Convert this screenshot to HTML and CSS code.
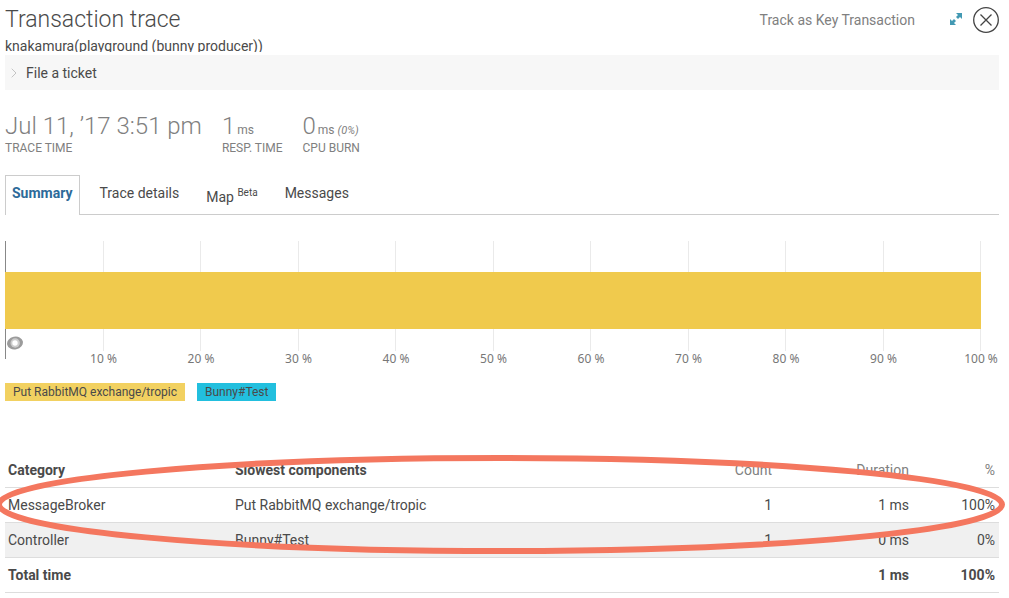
FILE: index.html
```html
<!DOCTYPE html>
<html lang="en">
<head>
<meta charset="utf-8">
<title>Transaction trace</title>
<link rel="stylesheet" href="styles.css">
</head>
<body>
<header class="header">
  <div class="heading">
    <h1 class="title">Transaction trace</h1>
    <p class="subtitle">knakamura(playground (bunny producer))</p>
  </div>
  <div class="actions">
    <a class="track" href="#">Track as Key Transaction</a>
    <button class="icon-button expand" type="button" aria-label="Expand">
      <svg width="12" height="12" viewBox="0 0 12 12" fill="#4299b3"><path d="M6 0h6v6l-2-2-2 2-2-2 2-2zM0 6l2 2 2-2 2 2-2 2 2 2H0z"/></svg>
    </button>
    <button class="icon-button" type="button" aria-label="Close">
      <svg width="26" height="26" viewBox="0 0 26 26" fill="none" stroke="#444"><circle cx="13" cy="13" r="12.3" stroke-width="1.3"/><path d="M7.5 7.5l11 11M18.5 7.5l-11 11" stroke-width="1.3"/></svg>
    </button>
  </div>
</header>
<button class="ticket" type="button">
  <svg width="6" height="10" viewBox="0 0 6 10" fill="none" stroke="#c4c4c4"><path d="M.7.7L5 5 .7 9.3"/></svg>
  File a ticket
</button>
<dl class="stats">
  <div class="stat"><dt class="stat-label">TRACE TIME</dt><dd class="stat-value">Jul 11, ’17 3:51 pm</dd></div>
  <div class="stat"><dt class="stat-label">RESP. TIME</dt><dd class="stat-value">1<span class="unit">ms</span></dd></div>
  <div class="stat"><dt class="stat-label">CPU BURN</dt><dd class="stat-value">0<span class="unit">ms <i class="share">(0%)</i></span></dd></div>
</dl>
<nav class="tabs">
  <a class="tab tab-active" href="#">Summary</a>
  <a class="tab" href="#">Trace details</a>
  <a class="tab tab-beta" href="#">Map <sup class="beta">Beta</sup></a>
  <a class="tab" href="#">Messages</a>
</nav>
<section class="chart" aria-label="Time by component">
  <div class="bar"></div>
  <div class="scale">
    <div class="tick"><span class="tick-label">10 %</span></div>
    <div class="tick"><span class="tick-label">20 %</span></div>
    <div class="tick"><span class="tick-label">30 %</span></div>
    <div class="tick"><span class="tick-label">40 %</span></div>
    <div class="tick"><span class="tick-label">50 %</span></div>
    <div class="tick"><span class="tick-label">60 %</span></div>
    <div class="tick"><span class="tick-label">70 %</span></div>
    <div class="tick"><span class="tick-label">80 %</span></div>
    <div class="tick"><span class="tick-label">90 %</span></div>
    <div class="tick"><span class="tick-label">100 %</span></div>
  </div>
  <svg class="marker" width="16" height="14" viewBox="0 0 16 14"><ellipse cx="8" cy="7" rx="8" ry="6.3" fill="#9b9b9b" transform="rotate(-12 8 7)"/><circle cx="8.2" cy="7" r="4.7" fill="#ccc"/><circle cx="8" cy="7" r="2.7" fill="#fff"/></svg>
</section>
<div class="legend">
  <span class="key key-put">Put RabbitMQ exchange/tropic</span>
  <span class="key key-bunny">Bunny#Test</span>
</div>
<div class="breakdown">
  <table class="table">
    <colgroup><col class="col-category"><col class="col-component"><col class="col-count"><col class="col-duration"><col class="col-percent"></colgroup>
    <thead>
      <tr><th>Category</th><th>Slowest components</th><th class="num">Count</th><th class="num">Duration</th><th class="num">%</th></tr>
    </thead>
    <tbody>
      <tr><td>MessageBroker</td><td>Put RabbitMQ exchange/tropic</td><td class="num">1</td><td class="num">1 ms</td><td class="num">100%</td></tr>
      <tr class="striped"><td>Controller</td><td>Bunny#Test</td><td class="num">1</td><td class="num">0 ms</td><td class="num">0%</td></tr>
    </tbody>
    <tfoot>
      <tr><td>Total time</td><td></td><td></td><td class="num">1 ms</td><td class="num">100%</td></tr>
    </tfoot>
  </table>
  <svg class="highlight" viewBox="0 0 1000 100" preserveAspectRatio="none" fill="none"><ellipse cx="500" cy="50" rx="500" ry="50" stroke="#f4775f" stroke-width="6" vector-effect="non-scaling-stroke"/></svg>
</div>
</body>
</html>
```
FILE: styles.css
```css
* { box-sizing: border-box; }
body {
  margin: 0;
  padding: 7px 10px 0 5px;
  background: #fff;
  color: #4a4a4a;
  font: 14px/18px Roboto, "Liberation Sans", sans-serif;
  overflow-x: hidden;
}
h1, p, dl, dd { margin: 0; }
a { color: inherit; text-decoration: none; }
button { border: 0; margin: 0; padding: 0; background: none; color: inherit; font: inherit; }
svg { display: block; }

.header { display: flex; justify-content: space-between; align-items: flex-start; height: 48px; }
.heading { height: 45px; overflow: hidden; }
.title { font-size: 23px; line-height: 26px; font-weight: 300; }
.subtitle { margin-top: 4px; }
.actions { display: flex; align-items: center; }
.track { color: #808080; }
.expand { margin: 0 11px 3px 35px; }

.ticket {
  display: flex;
  align-items: center;
  gap: 9px;
  width: 100%;
  height: 35px;
  padding: 0 6px;
  background: #f7f7f7;
}

.stats { display: flex; gap: 20px; margin-top: 21px; color: #808080; }
.stat { display: flex; flex-direction: column-reverse; }
.stat-value { font-size: 24px; line-height: 30px; font-weight: 300; white-space: nowrap; }
.stat-label { font-size: 12px; line-height: 14px; }
.unit { margin-left: 2px; font-size: 12px; line-height: 12px; font-weight: 400; }
.share { font-size: 11px; }

.tabs { display: flex; margin-top: 20px; border-bottom: 1px solid #ccc; }
.tab { height: 39px; margin-right: 13px; padding: 9px 7px; }
.tab-active {
  height: 40px;
  margin-bottom: -1px;
  padding: 8px 6px;
  border: 1px solid #ccc;
  border-bottom: 0;
  background: #fff;
  color: #2d6a99;
  font-weight: 700;
}
.tab-beta { padding-top: 13px; }
.beta { font-size: 10px; line-height: 10px; }

.chart { position: relative; margin: 26px 18px 0 0; }
.scale { display: grid; grid-template-columns: repeat(10, 1fr); height: 118px; border-left: 1px solid #888; margin-bottom: 8px; }
.tick {
  display: flex;
  flex-direction: column;
  justify-content: flex-end;
  align-items: flex-end;
  border-right: 1px solid #eaeaea;
}
.tick-label {
  width: 40px;
  margin: 0 -21px -8px 0;
  background: #fff;
  color: #777;
  font: 12px/16px "Noto Sans", sans-serif;
  text-align: center;
  white-space: nowrap;
}
.bar { position: absolute; top: 31px; left: 0; right: 0; height: 57px; background: #f0ca4d; }
.marker { position: absolute; top: 95px; left: 2px; }

.legend { display: flex; gap: 12px; margin-top: 24px; }
.key { padding: 0 8px; font-size: 12px; line-height: 18px; }
.key-put { background: #f2d161; }
.key-bunny { background: #22bfde; }

.breakdown { position: relative; margin-top: 52px; }
.table { width: 100%; border-collapse: collapse; table-layout: fixed; }
.table th, .table td { height: 35px; padding: 0 4px 0 3px; border-bottom: 1px solid #ddd; text-align: left; }
.table th { height: 34px; font-weight: 700; }
.table .num { padding-right: 4px; text-align: right; }
.table th.num { color: #808080; font-weight: 400; }
.table tfoot td { font-weight: 700; }
.striped { background: #f0f0f0; }
.col-category { width: 227px; }
.col-count { width: 101px; }
.col-duration { width: 137px; }
.col-percent { width: 86px; }
.highlight { position: absolute; top: 5px; left: -6px; width: calc(100% + 9px); height: 93px; overflow: visible; pointer-events: none; }
```
